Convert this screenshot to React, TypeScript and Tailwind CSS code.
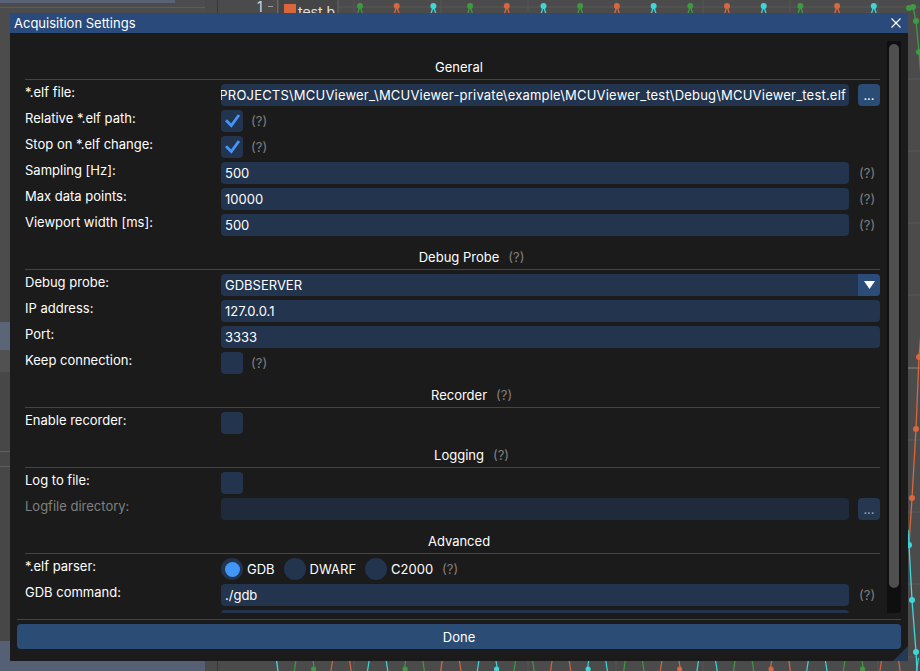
import React from 'react';

const CYAN = '#3fd6da';
const GREEN = '#3e9a40';
const ORANGE = '#d8673d';

function Help({ className = '' }: { className?: string }) {
  return <span className={`shrink-0 whitespace-nowrap text-[#808080] ${className}`}>(?)</span>;
}

function Header({ title, help }: { title: string; help?: boolean }) {
  return (
    <div className="pt-[9px] mb-[4px]">
      <div className="grid h-[16px] grid-cols-[1fr_auto_1fr] pl-[13px] leading-[16px]">
        <div />
        <div className="whitespace-nowrap text-white">{title}</div>
        <div className="flex">{help && <Help className="ml-[9px]" />}</div>
      </div>
      <div className="mt-[4px] h-px bg-[#44444c]" />
    </div>
  );
}

function Row({ label, dim, children }: { label: string; dim?: boolean; children?: React.ReactNode }) {
  return (
    <div className="mb-[4px] flex h-[22px]">
      <div className={`w-[196px] shrink-0 whitespace-nowrap leading-[16px] ${dim ? 'text-[#808080]' : 'text-white'}`}>{label}</div>
      <div className="flex min-w-0 flex-1 items-center leading-[16px]">{children}</div>
    </div>
  );
}

function Field({ value = '', dim, alignEnd }: { value?: string; dim?: boolean; alignEnd?: boolean }) {
  return (
    <div
      className={`flex h-[22px] min-w-0 flex-1 items-center overflow-hidden whitespace-nowrap rounded-[4px] px-[4px] leading-[16px] text-white ${
        dim ? 'bg-[#1f2a3a]' : 'bg-[#22344e]'
      } ${alignEnd ? 'justify-end pr-[3px] tracking-[0.2px]' : ''}`}
    >
      <span className="shrink-0">{value}</span>
    </div>
  );
}

function Trail({ children }: { children: React.ReactNode }) {
  return <div className="ml-[9px] flex w-[22px] shrink-0 items-center pl-px">{children}</div>;
}

function DotsButton({ dim }: { dim?: boolean }) {
  return (
    <div
      className={`ml-[9px] flex h-[22px] w-[22px] shrink-0 items-center justify-center rounded-[4px] ${
        dim ? 'bg-[#253850] text-[#9ea6b2]' : 'bg-[#2b4c74] text-white'
      }`}
    >
      ...
    </div>
  );
}

function Check({ on }: { on?: boolean }) {
  return (
    <div className="flex h-[22px] w-[22px] shrink-0 items-center justify-center rounded-[4px] bg-[#22344e]">
      {on && (
        <svg width="22" height="22" viewBox="0 0 22 22">
          <path d="M5 10.2 L10.3 15.5 L18 5" stroke="#4296fa" strokeWidth="2.8" fill="none" strokeLinejoin="miter" />
        </svg>
      )}
    </div>
  );
}

function Radio({ on, label, first }: { on?: boolean; label: string; first?: boolean }) {
  return (
    <div className={`flex items-center ${first ? '' : 'ml-[9px]'}`}>
      <div className="flex h-[22px] w-[22px] items-center justify-center rounded-full bg-[#22344e]">
        {on && <div className="h-[15px] w-[15px] rounded-full bg-[#4296fa]" />}
      </div>
      <span className="ml-[4px] whitespace-nowrap text-white">{label}</span>
    </div>
  );
}

function Combo({ value }: { value: string }) {
  return (
    <div className="flex h-[22px] flex-1 items-center overflow-hidden rounded-[4px] bg-[#22344e]">
      <span className="flex-1 px-[4px] text-white">{value}</span>
      <div className="flex h-full w-[22px] items-center justify-center bg-[#2b4b78]">
        <svg width="11" height="8" viewBox="0 0 11 8">
          <path d="M0 0 H11 L5.5 8 Z" fill="#ffffff" />
        </svg>
      </div>
    </div>
  );
}

function Chart() {
  const hLines = [7, 79, 151, 223, 295, 440, 512, 584, 657];
  const vLines = [354, 441, 528, 616, 703, 790, 878];
  const markerColors = [GREEN, ORANGE, CYAN];
  const markers = Array.from({ length: 15 }, (_, i) => ({ x: 360 + i * 36.7, c: markerColors[i % 3] }));
  const bottomColors = [CYAN, GREEN, GREEN, ORANGE, ORANGE, CYAN];
  const bottom = Array.from({ length: 36 }, (_, i) => ({ x: 277 + i * 18.3, c: bottomColors[i % 6], d: i % 2 === 0 }));
  return (
    <svg className="absolute inset-0" width="702" height="671" viewBox="218 0 702 671">
      {hLines.map((y) => (
        <line key={y} x1="278" x2="920" y1={y} y2={y} stroke="#585858" strokeWidth="1" />
      ))}
      <line x1="278" x2="920" y1="368" y2="368" stroke="#8a8a8a" strokeWidth="1" />
      {vLines.map((x) => (
        <line key={x} x1={x} x2={x} y1="0" y2="671" stroke="#575757" strokeWidth="1" />
      ))}
      <line x1="277.5" x2="277.5" y1="0" y2="671" stroke="#6a6a6a" strokeWidth="1" />
      <line x1="268" x2="273" y1="6.5" y2="6.5" stroke="#9a9a9a" strokeWidth="1" />
      <text x="257" y="12" fill="#d8d8d8" fontSize="14" fontFamily="Inter, sans-serif">1</text>
      <rect x="278" y="-4" width="60" height="20" fill="#454545" stroke="#666666" />
      <rect x="284" y="4" width="12" height="12" fill={ORANGE} />
      <text x="298" y="17" fill="#e0e0e0" fontSize="14" fontFamily="Inter, sans-serif">test.b</text>
      {markers.map((m, i) => (
        <g key={i}>
          <line x1={m.x} y1="6" x2={m.x - 2.5} y2="14" stroke={m.c} strokeWidth="1.3" />
          <line x1={m.x} y1="6" x2={m.x + 2.5} y2="14" stroke={m.c} strokeWidth="1.3" />
          <circle cx={m.x} cy="6" r="3" fill={m.c} />
        </g>
      ))}
      <polyline points="906,9 909,8 913,7 916,21 919,52 922,90" fill="none" stroke={GREEN} strokeWidth="1.3" />
      {[
        [909, 8],
        [913, 7],
        [916, 21],
        [919, 52],
      ].map(([x, y]) => (
        <circle key={`g${y}`} cx={x} cy={y} r="3" fill={GREEN} />
      ))}
      <polyline points="922,320 919,357 916,429 912,498 909,545" fill="none" stroke={ORANGE} strokeWidth="1.3" />
      {[
        [919, 357],
        [916, 429],
        [912, 498],
      ].map(([x, y]) => (
        <circle key={`o${y}`} cx={x} cy={y} r="3" fill={ORANGE} />
      ))}
      <polyline points="908,530 909,545 912,600 916,652 917,671" fill="none" stroke={CYAN} strokeWidth="1.3" />
      {[
        [909, 545],
        [912, 600],
        [916, 652],
      ].map(([x, y]) => (
        <circle key={`c${y}`} cx={x} cy={y} r="3" fill={CYAN} />
      ))}
      {bottom.map((b, i) => (
        <g key={`b${i}`}>
          <line x1={b.d ? b.x - 1 : b.x + 1} y1="658" x2={b.d ? b.x + 1 : b.x - 1} y2="671" stroke={b.c} strokeWidth="1.2" />
          {i % 5 === 2 && <circle cx={b.x} cy="669" r="2.6" fill={b.c} />}
        </g>
      ))}
    </svg>
  );
}

function Background() {
  return (
    <div className="flex h-full w-full">
      <div className="flex w-[205px] shrink-0 flex-col bg-[#4c4c4c]">
        <div className="flex h-[3px]">
          <div className="w-[175px] bg-[#5a6375]" />
        </div>
        <div className="h-[4px]" />
        <div className="h-px bg-[#5c5c5c]" />
        <div className="h-[314px]" />
        <div className="h-[28px] bg-[#5a6578]" />
        <div className="h-[22px] bg-[#515151]" />
        <div className="h-[79px] bg-[#474747]" />
        <div className="h-px bg-[#5e5e5e]" />
        <div className="h-[14px] bg-[#474747]" />
        <div className="h-px bg-[#5e5e5e]" />
        <div className="flex-1 bg-[#474747]" />
        <div className="h-[30px] bg-[#566074]" />
      </div>
      <div className="w-[13px] shrink-0 border-r border-[#393939] bg-[#4a4a4a]" />
      <div className="relative flex-1 bg-[#4b4b4b]">
        <Chart />
      </div>
    </div>
  );
}

const ELF_PATH =
  'C:\\Users\\dev\\Documents\\PROJECTS\\MCUViewer_\\MCUViewer-private\\example\\MCUViewer_test\\Debug\\MCUViewer_test.elf';

export default function App() {
  return (
    <div className="relative h-[671px] w-[920px] overflow-hidden font-['Inter','Noto_Sans',sans-serif] text-[13px]">
      <Background />

      <div className="absolute left-[10px] top-[13px] flex h-[648px] w-[898px] flex-col bg-[#1b1b1b]">
        <div className="flex h-[20px] shrink-0 items-center justify-between bg-[#294a7a] pl-[4px] pr-[7px]">
          <span className="leading-[16px] text-white">Acquisition Settings</span>
          <svg width="10" height="10" viewBox="0 0 10 10">
            <path d="M0.5 0.5 L9.5 9.5 M9.5 0.5 L0.5 9.5" stroke="#ffffff" strokeWidth="1.2" />
          </svg>
        </div>

        <div className="flex flex-1 flex-col px-[7px] pt-[8px]">
          <div className="flex h-[572px] shrink-0">
            <div className="min-w-0 flex-1 overflow-hidden pl-[8px] pr-[7px] pt-[9px]">
              <Header title="General" />
              <Row label="*.elf file:">
                <Field value={ELF_PATH} alignEnd />
                <DotsButton />
              </Row>
              <Row label="Relative *.elf path:">
                <Check on />
                <Help className="ml-[8px]" />
              </Row>
              <Row label="Stop on *.elf change:">
                <Check on />
                <Help className="ml-[8px]" />
              </Row>
              <Row label="Sampling [Hz]:">
                <Field value="500" />
                <Trail>
                  <Help />
                </Trail>
              </Row>
              <Row label="Max data points:">
                <Field value="10000" />
                <Trail>
                  <Help />
                </Trail>
              </Row>
              <Row label="Viewport width [ms]:">
                <Field value="500" />
                <Trail>
                  <Help />
                </Trail>
              </Row>

              <Header title="Debug Probe" help />
              <Row label="Debug probe:">
                <Combo value="GDBSERVER" />
              </Row>
              <Row label="IP address:">
                <Field value="127.0.0.1" />
              </Row>
              <Row label="Port:">
                <Field value="3333" />
              </Row>
              <Row label="Keep connection:">
                <Check />
                <Help className="ml-[8px]" />
              </Row>

              <Header title="Recorder" help />
              <Row label="Enable recorder:">
                <Check />
              </Row>

              <Header title="Logging" help />
              <Row label="Log to file:">
                <Check />
              </Row>
              <Row label="Logfile directory:" dim>
                <Field dim />
                <DotsButton dim />
              </Row>

              <Header title="Advanced" />
              <Row label="*.elf parser:">
                <Radio on label="GDB" first />
                <Radio label="DWARF" />
                <Radio label="C2000" />
                <Help className="ml-[9px]" />
              </Row>
              <Row label="GDB command:">
                <Field value="./gdb" />
                <Trail>
                  <Help />
                </Trail>
              </Row>
              <Row label="MCU core:">
                <Field value="" />
                <Trail>
                  <Help />
                </Trail>
              </Row>
            </div>
            <div className="w-[14px] shrink-0 rounded-br-[4px] bg-[#0f0f0f] pt-[3px]">
              <div className="mx-[2px] h-[544px] rounded-full bg-[#4f4f4f]" />
            </div>
          </div>

          <div className="mt-[6px] h-px bg-[#44444c]" />
          <div className="mt-[4px] flex h-[25px] items-center justify-center rounded-[4px] bg-[#2b4c74] leading-[16px] text-white">
            Done
          </div>
        </div>

        <svg className="absolute bottom-0 right-0" width="16" height="16" viewBox="0 0 16 16">
          <path d="M1 16 H16 V1 Z" fill="#233954" />
        </svg>
      </div>
    </div>
  );
}
